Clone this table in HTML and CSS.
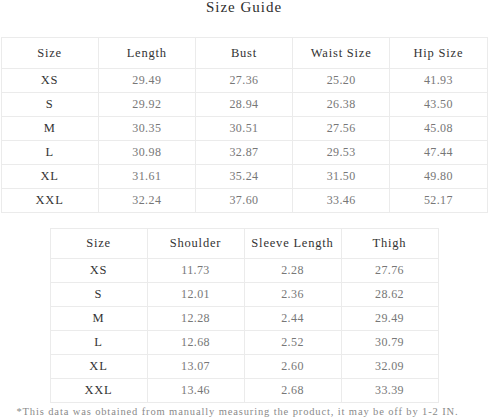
FILE: index.html
```html
<!DOCTYPE html>
<html>
<head>
<meta charset="utf-8">
<link rel="stylesheet" href="styles.css">
</head>
<body>
<div class="page">
  <h1 class="title">Size Guide</h1>
  <table class="chart chart-wide">
    <thead>
      <tr><th>Size</th><th>Length</th><th>Bust</th><th>Waist Size</th><th>Hip Size</th></tr>
    </thead>
    <tbody>
      <tr><th>XS</th><td>29.49</td><td>27.36</td><td>25.20</td><td>41.93</td></tr>
      <tr><th>S</th><td>29.92</td><td>28.94</td><td>26.38</td><td>43.50</td></tr>
      <tr><th>M</th><td>30.35</td><td>30.51</td><td>27.56</td><td>45.08</td></tr>
      <tr><th>L</th><td>30.98</td><td>32.87</td><td>29.53</td><td>47.44</td></tr>
      <tr><th>XL</th><td>31.61</td><td>35.24</td><td>31.50</td><td>49.80</td></tr>
      <tr><th>XXL</th><td>32.24</td><td>37.60</td><td>33.46</td><td>52.17</td></tr>
    </tbody>
  </table>
  <table class="chart chart-narrow">
    <thead>
      <tr><th>Size</th><th>Shoulder</th><th>Sleeve Length</th><th>Thigh</th></tr>
    </thead>
    <tbody>
      <tr><th>XS</th><td>11.73</td><td>2.28</td><td>27.76</td></tr>
      <tr><th>S</th><td>12.01</td><td>2.36</td><td>28.62</td></tr>
      <tr><th>M</th><td>12.28</td><td>2.44</td><td>29.49</td></tr>
      <tr><th>L</th><td>12.68</td><td>2.52</td><td>30.79</td></tr>
      <tr><th>XL</th><td>13.07</td><td>2.60</td><td>32.09</td></tr>
      <tr><th>XXL</th><td>13.46</td><td>2.68</td><td>33.39</td></tr>
    </tbody>
  </table>
  <p class="note">*This data was obtained from manually measuring the product, it may be off by 1-2 IN.</p>
</div>
</body>
</html>
```

FILE: styles.css
```css
html, body {
  margin: 0;
  padding: 0;
  background: #ffffff;
}

.page {
  width: 488px;
  display: flex;
  flex-direction: column;
  align-items: center;
  font-family: "Liberation Serif", "Noto Sans CJK SC", serif;
  color: #333333;
}

.title {
  margin: 0;
  height: 37px;
  line-height: 14px;
  font-size: 15px;
  font-weight: normal;
  letter-spacing: 1px;
  color: #2e2e2e;
  text-align: center;
}

.chart {
  border-collapse: collapse;
  table-layout: fixed;
}

.chart-wide {
  width: 487px;
}

.chart-narrow {
  width: 389px;
  margin-top: 15px;
}

.chart th,
.chart td {
  border: 1px solid #ebebeb;
  padding: 0;
  text-align: center;
  vertical-align: middle;
  font-weight: normal;
  height: 23px;
}

.chart th {
  color: #333333;
  font-size: 12.5px;
  letter-spacing: 0.8px;
}

.chart td {
  color: #777777;
  font-size: 12px;
  letter-spacing: 0.4px;
}

.chart-wide thead th {
  height: 30px;
}

.chart-narrow thead th {
  height: 29px;
}

.note {
  margin: 3px 13px 0 0;
  font-size: 10.5px;
  letter-spacing: 0.87px;
  line-height: 12px;
  color: #8a8a8a;
  text-align: center;
  white-space: nowrap;
}
```
